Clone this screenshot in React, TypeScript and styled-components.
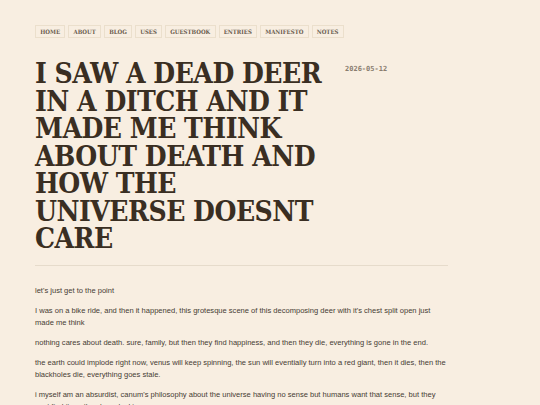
import React from "react";
import styled, { createGlobalStyle } from "styled-components";

const GlobalStyle = createGlobalStyle`
  html, body {
    margin: 0;
    padding: 0;
    background: #f8eee1;
  }
  body {
    font-family: "Liberation Sans", Arial, sans-serif;
    color: #3a3027;
  }
`;

const navItems = ["Home", "About", "Blog", "Uses", "Guestbook", "Entries", "Manifesto", "Notes"];

const paragraphs = [
  "let's just get to the point",
  "I was on a bike ride, and then it happened, this grotesque scene of this decomposing deer with it's chest split open just made me think",
  "nothing cares about death. sure, family, but then they find happiness, and then they die, everything is gone in the end.",
  "the earth could implode right now, venus will keep spinning, the sun will eventially turn into a red giant, then it dies, then the blackholes die, everything goes stale.",
  "i myself am an absurdist, canum's philosophy about the universe having no sense but humans want that sense, but they cant find it, so they keep looking anyway.",
];

export default function App() {
  return (
    <>
      <GlobalStyle />
      <Page>
        <Nav>
          {navItems.map((item) => (
            <NavLink key={item} href="#">
              {item}
            </NavLink>
          ))}
        </Nav>
        <Header>
          <Title>I saw a dead deer in a ditch and it made me think about death and how the universe doesnt care</Title>
          <PostDate>2026-05-12</PostDate>
        </Header>
        <Divider />
        <Body>
          {paragraphs.map((p, i) => (
            <Para key={i}>{p}</Para>
          ))}
        </Body>
      </Page>
    </>
  );
}

const Page = styled.main`
  width: 413px;
  padding: 25px 0 0 35px;
`;

const Nav = styled.nav`
  display: flex;
  gap: 3px;
`;

const NavLink = styled.a`
  display: block;
  height: 13px;
  line-height: 12px;
  padding: 0 4.2px;
  border: 1px solid #ebdfcc;
  box-sizing: border-box;
  font-family: "DejaVu Serif Condensed", "DejaVu Serif", serif;
  font-weight: 700;
  font-size: 6px;
  text-transform: uppercase;
  color: #6b5d4f;
  text-decoration: none;
`;

const Header = styled.header`
  display: flex;
  align-items: flex-start;
  gap: 14px;
  margin-top: 22px;
  padding-bottom: 12px;
`;

const Title = styled.h1`
  margin: 0;
  width: 296px;
  flex: none;
  font-family: "DejaVu Serif Condensed", "DejaVu Serif", serif;
  font-weight: 700;
  font-size: 28px;
  line-height: 27.5px;
  letter-spacing: -0.5px;
  text-transform: uppercase;
  color: #3a2e22;
`;

const PostDate = styled.span`
  margin-top: 5px;
  white-space: nowrap;
  font-family: "DejaVu Sans Mono", monospace;
  font-weight: 700;
  font-size: 7px;
  color: #8a7d6f;
`;

const Divider = styled.hr`
  margin: 0;
  border: none;
  border-top: 1px solid #e6dbcb;
`;

const Body = styled.section`
  padding-top: 19px;
`;

const Para = styled.p`
  margin: 0 0 8px;
  font-size: 7.55px;
  line-height: 12px;
  color: #463c33;
`;
